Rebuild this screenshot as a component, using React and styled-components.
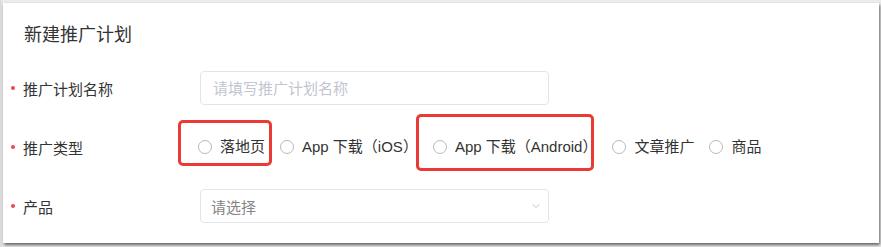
import React from "react";
import styled, { createGlobalStyle } from "styled-components";
import { ChevronDown } from "lucide-react";

const GlobalStyle = createGlobalStyle`
    html, body {
        margin: 0;
        padding: 0;
        background: #ececec;
    }
    body {
        font-family: "Liberation Sans", "Noto Sans CJK SC", sans-serif;
        color: #333;
    }
`;

const types = [
    { label: "落地页", mark: { top: -27, bottom: -19, left: -20, right: -7 } },
    { label: "App 下载（iOS）" },
    { label: "App 下载（Android）", mark: { top: -33, bottom: -24, left: -17, right: 3 } },
    { label: "文章推广" },
    { label: "商品" },
];

const App = () => {
    return (
        <>
            <GlobalStyle />
            <Frame>
                <Card>
                    <Title>新建推广计划</Title>
                    <Form>
                        <Row>
                            <Label>推广计划名称</Label>
                            <Input placeholder="请填写推广计划名称" />
                        </Row>
                        <Row tall>
                            <Label>推广类型</Label>
                            <RadioGroup>
                                {types.map(t => (
                                    <RadioItem key={t.label} $mark={t.mark}>
                                        <Circle />
                                        <RadioText>{t.label}</RadioText>
                                    </RadioItem>
                                ))}
                            </RadioGroup>
                        </Row>
                        <Row>
                            <Label>产品</Label>
                            <Select>
                                <span>请选择</span>
                                <ChevronDown size={12} strokeWidth={1.5} color="#a9a9c9" />
                            </Select>
                        </Row>
                    </Form>
                </Card>
            </Frame>
        </>
    );
};

export default App;

const Frame = styled.div`
    width: 881px;
    height: 247px;
    box-sizing: border-box;
    padding: 3px 2px 4px 3px;
    background: linear-gradient(to right, #d8d8d8, #ececec 3px);
    overflow: hidden;
`;

const Card = styled.div`
    height: 240px;
    box-sizing: border-box;
    padding: 20px 0 0 8px;
    background: #fff;
    box-shadow: 1px 2px 3px rgba(0, 0, 0, 0.6);
`;

const Title = styled.div`
    margin-left: 13px;
    font-size: 18px;
    line-height: 24px;
    color: #333;
`;

const Form = styled.div`
    display: flex;
    flex-direction: column;
    gap: 23px;
    margin-top: 24px;
`;

const Row = styled.div`
    display: flex;
    align-items: center;
    height: ${p => (p.tall ? "38px" : "34px")};
`;

const Label = styled.div`
    display: flex;
    align-items: center;
    gap: 8px;
    width: 189px;
    font-size: 15px;
    color: #333;

    &::before {
        content: "";
        width: 4px;
        height: 4px;
        border-radius: 50%;
        background: #f0454e;
    }
`;

const Input = styled.input`
    width: 349px;
    height: 34px;
    box-sizing: border-box;
    padding: 0 12px;
    border: 1px solid #e3e3ee;
    border-radius: 4px;
    font-family: inherit;
    font-size: 15px;
    outline: none;

    &::placeholder {
        color: #c2c5d2;
    }
`;

const Select = styled.div`
    display: flex;
    align-items: center;
    justify-content: space-between;
    width: 349px;
    height: 34px;
    box-sizing: border-box;
    padding: 0 6px 0 10px;
    border: 1px solid #e3e3ee;
    border-radius: 4px;
    font-size: 15px;
    color: #858585;
`;

const RadioGroup = styled.div`
    display: flex;
    align-items: center;
    gap: 15px;
    margin-left: -2px;
`;

const RadioItem = styled.label`
    position: relative;
    display: flex;
    align-items: center;
    gap: 8px;

    ${p => p.$mark && `
        &::after {
            content: "";
            position: absolute;
            top: ${p.$mark.top + 11}px;
            bottom: ${p.$mark.bottom + 11}px;
            left: ${p.$mark.left}px;
            right: ${p.$mark.right}px;
            border: 3px solid #ea3a35;
            border-radius: 5px;
            pointer-events: none;
        }
    `}
`;

const Circle = styled.span`
    width: 14px;
    height: 14px;
    box-sizing: border-box;
    border: 1px solid #b9b9b9;
    border-radius: 50%;
    background: #fff;
`;

const RadioText = styled.span`
    font-size: 15px;
    line-height: 22px;
    color: #333;
`;
